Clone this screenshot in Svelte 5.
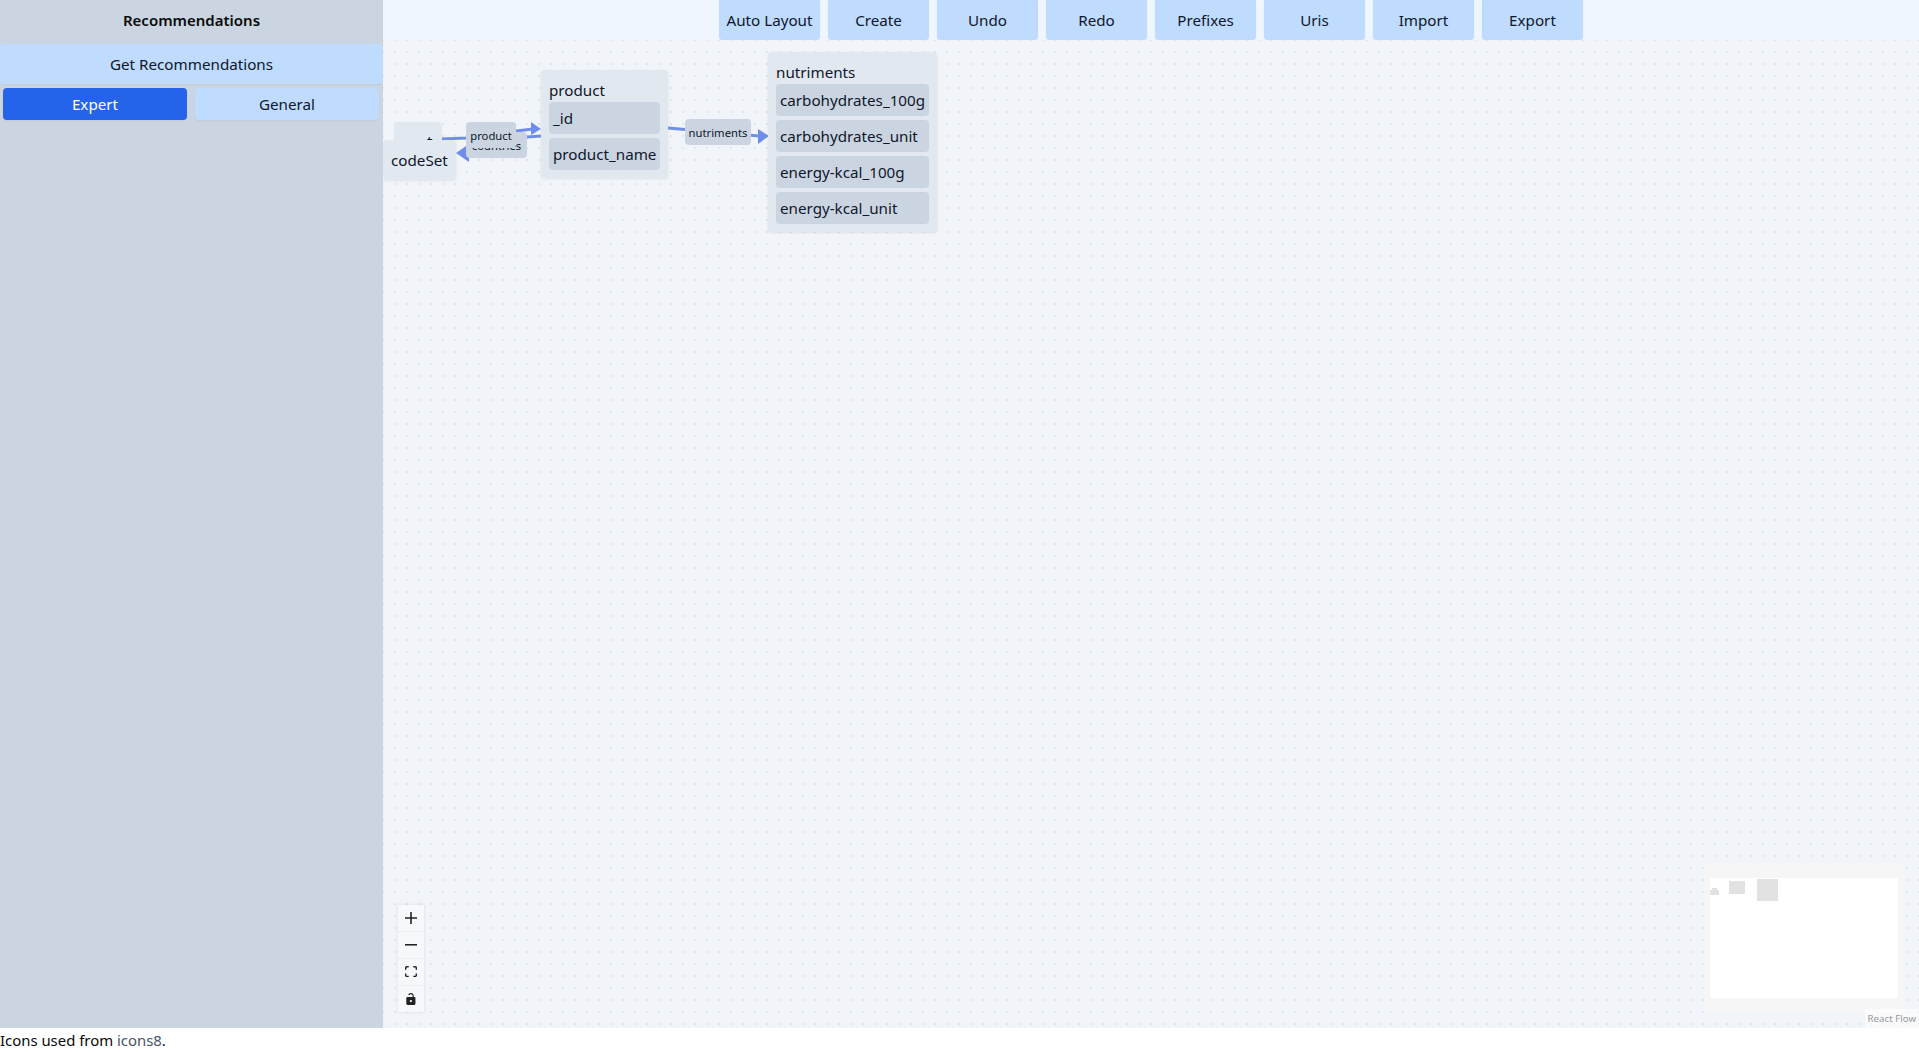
<script lang="ts">
	const actions = ['Auto Layout', 'Create', 'Undo', 'Redo', 'Prefixes', 'Uris', 'Import', 'Export'];

	// node positions are relative to the canvas, which starts at 383,40
	const nodes = [
		{ title: 't', left: 11, top: 82, items: [], cls: 'stub' },
		{ title: 'codeSet', left: 0, top: 100, items: [], cls: 'single' },
		{ title: 'product', left: 158, top: 30, items: ['_id', 'product_name'], cls: '' },
		{
			title: 'nutriments',
			left: 385,
			top: 12,
			items: ['carbohydrates_100g', 'carbohydrates_unit', 'energy-kcal_100g', 'energy-kcal_unit'],
			cls: ''
		}
	];

	const labels = [
		{ text: 'countries', left: 83, top: 92, width: 61 },
		{ text: 'product', left: 83, top: 82, width: 50 },
		{ text: 'nutriments', left: 302, top: 79, width: 66 }
	];

	const miniNodes = [
		{ x: 2, y: 10, w: 5, h: 3 },
		{ x: 0, y: 12, w: 9, h: 5 },
		{ x: 19, y: 3, w: 16, h: 13 },
		{ x: 47, y: 1, w: 21, h: 22 }
	];
</script>

<div class="page">
	<div class="main">
		<aside class="sidebar">
			<h2>Recommendations</h2>
			<button class="btn wide">Get Recommendations</button>
			<div class="tabs">
				<button class="btn active">Expert</button>
				<button class="btn">General</button>
			</div>
		</aside>
		<div class="workspace">
			<div class="toolbar">
				{#each actions as action}
					<button class="btn action">{action}</button>
				{/each}
			</div>
			<div class="canvas">
				<svg class="edges" width="1536" height="988">
					<g fill="none" stroke="#6f8eea" stroke-width="3">
						<path d="M58 99 L84 98 L133 91 L150 89" />
						<path d="M158 96 L144 97 L86 113" />
						<path d="M285 88 L376 96" />
					</g>
					<g fill="#6f8eea">
						<path d="M158 89 L148 82 L148 95 Z" />
						<path d="M73 113 L86 104 L86 122 Z" />
						<path d="M386 96 L375 89 L375 104 Z" />
					</g>
				</svg>

				{#each nodes as node}
					<div class="node {node.cls}" style="left: {node.left}px; top: {node.top}px">
						<div class="title">{node.title}</div>
						{#if node.items.length}
							<div class="items">
								{#each node.items as item}
									<div class="item">{item}</div>
								{/each}
							</div>
						{/if}
					</div>
				{/each}

				{#each labels as label}
					<div class="edge-label" style="left: {label.left}px; top: {label.top}px; width: {label.width}px">
						{label.text}
					</div>
				{/each}

				<div class="controls">
					<button aria-label="zoom in">
						<svg viewBox="0 0 32 32"><path d="M32 18.133H18.133V32h-4.266V18.133H0v-4.266h13.867V0h4.266v13.867H32z" /></svg>
					</button>
					<button aria-label="zoom out">
						<svg viewBox="0 0 32 5"><path d="M0 0h32v4.2H0z" /></svg>
					</button>
					<button aria-label="fit view">
						<svg viewBox="0 0 32 30"><path d="M3.692 4.63c0-.53.4-.938.939-.938h5.215V0H4.708C2.13 0 0 2.054 0 4.63v5.216h3.692V4.631zM27.354 0h-5.2v3.692h5.17c.53 0 .984.4.984.939v5.215H32V4.631A4.624 4.624 0 0027.354 0zm.954 24.83c0 .532-.4.94-.939.94h-5.215v3.768h5.215c2.577 0 4.631-2.13 4.631-4.707v-5.139h-3.692v5.139zm-23.677.94c-.531 0-.939-.4-.939-.94v-5.138H0v5.139c0 2.577 2.13 4.707 4.708 4.707h5.138V25.77H4.631z" /></svg>
					</button>
					<button aria-label="toggle interactivity">
						<svg viewBox="0 0 25 32"><path d="M21.333 10.667H19.81V7.619C19.81 3.429 16.38 0 12.19 0 8.76 0 6.2 1.9 5.2 4.6l2.8 1.1c.6-1.6 2.2-2.7 4.19-2.7 2.6 0 4.57 2 4.57 4.62v3.05H3.048A3.056 3.056 0 000 13.714v15.238A3.056 3.056 0 003.048 32h18.285a3.056 3.056 0 003.048-3.048V13.714a3.056 3.056 0 00-3.048-3.047zM12.19 24.533a3.056 3.056 0 01-3.047-3.047 3.056 3.056 0 013.047-3.048 3.056 3.056 0 013.048 3.048 3.056 3.056 0 01-3.048 3.047z" /></svg>
					</button>
				</div>

				<div class="minimap">
					<div class="mini-view">
						{#each miniNodes as m}
							<span style="left: {m.x}px; top: {m.y}px; width: {m.w}px; height: {m.h}px"></span>
						{/each}
					</div>
				</div>

				<div class="attribution">React Flow</div>
			</div>
		</div>
	</div>
	<footer>Icons used from <a href="#top">icons8</a>.</footer>
</div>

<style>
	:global(body) {
		margin: 0;
		background: #fff;
		color: #0f172a;
		font-family: 'Noto Sans', sans-serif;
		font-size: 15.2px;
	}

	.page {
		display: flex;
		flex-direction: column;
		height: 1052px;
		overflow: hidden;
	}

	.main {
		display: flex;
		height: 1028px;
	}

	.sidebar {
		display: flex;
		flex-direction: column;
		flex: 0 0 383px;
		background: #cbd5e1;
	}

	h2 {
		margin: 0;
		height: 40px;
		font-size: 15px;
		font-weight: 600;
		line-height: 40px;
		text-align: center;
		color: #0a0a0a;
	}

	.btn {
		height: 32px;
		padding: 0;
		border: none;
		border-radius: 4px;
		background: #bfdbfe;
		color: #0f172a;
		font-family: inherit;
		font-size: 15.2px;
		box-shadow: 0 1px 2px rgba(0, 0, 0, 0.05);
	}

	.wide {
		height: 40px;
		margin-top: 4px;
	}

	.tabs {
		display: flex;
		gap: 8px;
		padding: 4px 4px 0 3px;
	}

	.tabs .btn {
		flex: 1;
	}

	.btn.active {
		background: #2563eb;
		color: #fff;
	}

	.workspace {
		display: flex;
		flex-direction: column;
		flex: 1;
		min-width: 0;
	}

	.toolbar {
		display: flex;
		justify-content: center;
		gap: 8px;
		height: 40px;
		background: #eff6ff;
	}

	.action {
		width: 101px;
		height: 40px;
		border-radius: 0 0 4px 4px;
	}

	.canvas {
		position: relative;
		flex: 1;
		overflow: hidden;
		background-color: #f1f5f9;
		background-image: radial-gradient(circle at 1px 1px, #e0e5ec 1px, transparent 1.2px);
		background-size: 12px 12px;
		background-position: -1px -1px;
	}

	.edges {
		position: absolute;
		left: 0;
		top: 0;
	}

	.node {
		position: absolute;
		padding: 8px;
		border-radius: 4px;
		background: #e2e8f0;
		box-shadow: 0 1px 3px rgba(0, 0, 0, 0.08);
	}

	.title {
		height: 24px;
		line-height: 24px;
	}

	.items {
		display: flex;
		flex-direction: column;
		gap: 4px;
	}

	.item {
		min-width: 103px;
		height: 32px;
		padding: 0 4px;
		border-radius: 4px;
		background: #cbd5e1;
		line-height: 32px;
		white-space: nowrap;
	}

	.node.stub {
		box-sizing: border-box;
		width: 48px;
		height: 42px;
		padding: 7px 0 0 33px;
		box-shadow: none;
	}

	.edge-label {
		position: absolute;
		height: 26px;
		border-radius: 4px;
		background: #cbd5e1;
		font-size: 11.25px;
		line-height: 27px;
		text-align: center;
		white-space: nowrap;
	}

	.controls {
		position: absolute;
		left: 15px;
		top: 865px;
		display: flex;
		flex-direction: column;
		box-shadow: 0 0 2px 1px rgba(0, 0, 0, 0.06);
	}

	.controls button {
		display: flex;
		align-items: center;
		justify-content: center;
		box-sizing: content-box;
		width: 26px;
		height: 26px;
		padding: 0;
		border: none;
		border-bottom: 1px solid #eceef1;
		background: #f6f8fb;
	}

	.controls button:last-child {
		border-bottom: none;
	}

	.controls svg {
		width: 12px;
		max-height: 12px;
		fill: #222;
	}

	.minimap {
		position: absolute;
		left: 1321px;
		top: 823px;
		width: 200px;
		height: 150px;
		padding: 15px 6px;
		box-sizing: border-box;
		background: rgba(245, 245, 245, 0.95);
	}

	.mini-view {
		position: relative;
		height: 120px;
		background: #fff;
	}

	.mini-view span {
		position: absolute;
		background: #e2e2e2;
	}

	.attribution {
		position: absolute;
		right: 0;
		bottom: 0;
		padding: 2px 3px;
		background: rgba(255, 255, 255, 0.5);
		color: #999;
		font-size: 9.7px;
		line-height: 15px;
	}

	footer {
		height: 24px;
		font-size: 14.9px;
		line-height: 24px;
		color: #0a0a0a;
	}

	a {
		color: #475569;
		text-decoration: none;
	}
</style>
